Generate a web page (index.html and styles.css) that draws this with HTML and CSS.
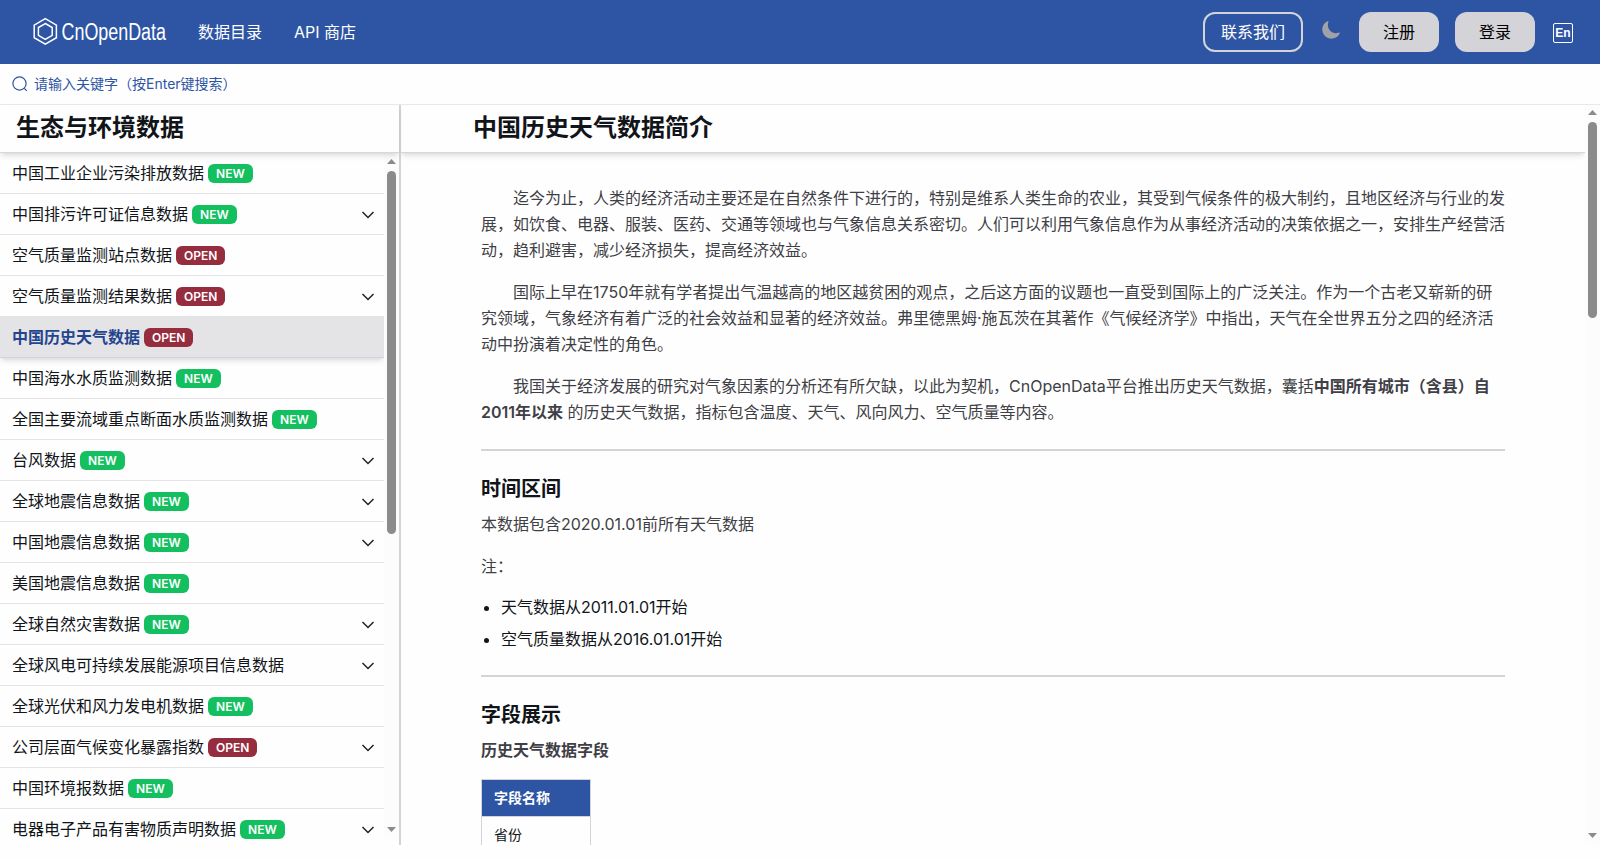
FILE: index.html
```html
<!DOCTYPE html>
<html lang="zh-CN">
<head>
    <meta charset="UTF-8">
    <meta name="viewport" content="width=device-width, initial-scale=1.0">
    <title>中国历史天气数据 - CnOpenData</title>
    <link rel="stylesheet" href="styles.css">
</head>
<body>

    <!-- Navbar -->
    <header class="navbar">
        <a class="logo" href="#">
            <svg width="136" height="32" viewBox="0 0 136 32" fill="none" stroke="#fff">
                <path d="M13.3 2.7 L24.4 9.1 V21.7 L13.3 28.1 L2.2 21.7 V9.1 Z" stroke-width="1.5"/>
                <path d="M13.3 7.5 L20.2 11.5 V19.3 L13.3 23.3 L6.4 19.3 V11.5 Z" stroke-width="1.5"/>
                <text class="logo-text" x="29.5" y="23.5" textLength="104.5" lengthAdjust="spacingAndGlyphs">CnOpenData</text>
            </svg>
        </a>
        <nav class="nav-links">
            <a href="#">数据目录</a>
            <a href="#">API 商店</a>
        </nav>
        <div class="nav-actions">
            <a class="btn btn-outline" href="#">联系我们</a>
            <svg class="moon" width="20" height="20" viewBox="0 0 512 512" fill="#a1a1aa">
                <path d="M264 480A232 232 0 0132 248c0-94 54-178.28 137.61-214.67a16 16 0 0121.06 21.06C181.07 76.43 176 104.66 176 136c0 110.28 89.72 200 200 200 31.34 0 59.57-5.07 81.61-14.67a16 16 0 0121.06 21.06C442.28 426 358 480 264 480z"/>
            </svg>
            <a class="btn btn-solid" href="#">注册</a>
            <a class="btn btn-solid" href="#">登录</a>
            <a class="lang" href="#">En</a>
        </div>
    </header>

    <!-- Search -->
    <div class="search">
        <svg width="16" height="16" viewBox="0 0 16 16" fill="none" stroke="#2d55a4" stroke-width="1.2">
            <circle cx="7.5" cy="7.5" r="6.6"/>
            <path d="M12.3 12.3 L14.8 14.8"/>
        </svg>
        <span>请输入关键字（按Enter键搜索）</span>
    </div>

    <div class="page">
        <!-- Sidebar -->
        <aside class="sidebar">
            <h2 class="title sidebar-title">生态与环境数据</h2>
            <div class="sidebar-body">
                <ul class="menu" id="menu"></ul>
                <div class="scrollbar scrollbar-menu">
                    <svg width="9" height="5" viewBox="0 0 9 5"><path d="M0 5 L4.5 0 L9 5 Z"/></svg>
                    <div class="thumb thumb-menu"></div>
                    <svg class="arrow-down" width="9" height="5" viewBox="0 0 9 5"><path d="M0 0 L4.5 5 L9 0 Z"/></svg>
                </div>
            </div>
        </aside>

        <!-- Content -->
        <main class="main">
            <div class="content">
                <h2 class="title content-title">中国历史天气数据简介</h2>
                <article class="article">
                    <p class="indent">迄今为止，人类的经济活动主要还是在自然条件下进行的，特别是维系人类生命的农业，其受到气候条件的极大制约，且地区经济与行业的发展，如饮食、电器、服装、医药、交通等领域也与气象信息关系密切。人们可以利用气象信息作为从事经济活动的决策依据之一，安排生产经营活动，趋利避害，减少经济损失，提高经济效益。</p>
                    <p class="indent">国际上早在1750年就有学者提出气温越高的地区越贫困的观点，之后这方面的议题也一直受到国际上的广泛关注。作为一个古老又崭新的研究领域，气象经济有着广泛的社会效益和显著的经济效益。弗里德黑姆·施瓦茨在其著作《气候经济学》中指出，天气在全世界五分之四的经济活动中扮演着决定性的角色。</p>
                    <p class="indent">我国关于经济发展的研究对气象因素的分析还有所欠缺，以此为契机，CnOpenData平台推出历史天气数据，囊括<strong>中国所有城市（含县）自2011年以来</strong> 的历史天气数据，指标包含温度、天气、风向风力、空气质量等内容。</p>
                    <hr>
                    <h3>时间区间</h3>
                    <p>本数据包含2020.01.01前所有天气数据</p>
                    <p>注：</p>
                    <ul class="notes">
                        <li>天气数据从2011.01.01开始</li>
                        <li>空气质量数据从2016.01.01开始</li>
                    </ul>
                    <hr>
                    <h3>字段展示</h3>
                    <h4>历史天气数据字段</h4>
                    <table class="fields">
                        <thead>
                            <tr><th>字段名称</th></tr>
                        </thead>
                        <tbody>
                            <tr><td>省份</td></tr>
                        </tbody>
                    </table>
                </article>
            </div>
            <div class="scrollbar">
                <svg width="9" height="5" viewBox="0 0 9 5"><path d="M0 5 L4.5 0 L9 5 Z"/></svg>
                <div class="thumb thumb-page"></div>
                <svg class="arrow-down" width="9" height="5" viewBox="0 0 9 5"><path d="M0 0 L4.5 5 L9 0 Z"/></svg>
            </div>
        </main>
    </div>

    <script>
        // name, badge, has submenu
        const items = [
            ["中国工业企业污染排放数据", "NEW", false],
            ["中国排污许可证信息数据", "NEW", true],
            ["空气质量监测站点数据", "OPEN", false],
            ["空气质量监测结果数据", "OPEN", true],
            ["中国历史天气数据", "OPEN", false],
            ["中国海水水质监测数据", "NEW", false],
            ["全国主要流域重点断面水质监测数据", "NEW", false],
            ["台风数据", "NEW", true],
            ["全球地震信息数据", "NEW", true],
            ["中国地震信息数据", "NEW", true],
            ["美国地震信息数据", "NEW", false],
            ["全球自然灾害数据", "NEW", true],
            ["全球风电可持续发展能源项目信息数据", "", true],
            ["全球光伏和风力发电机数据", "NEW", false],
            ["公司层面气候变化暴露指数", "OPEN", true],
            ["中国环境报数据", "NEW", false],
            ["电器电子产品有害物质声明数据", "NEW", true]
        ];
        const active = "中国历史天气数据";
        const chevron = '<svg class="chevron" width="14" height="8" viewBox="0 0 14 8"><path d="M1.5 1 L7 6.5 L12.5 1"/></svg>';

        const menu = document.getElementById("menu");
        items.forEach(([name, badge, sub]) => {
            const li = document.createElement("li");
            li.className = name === active ? "menu-item active" : "menu-item";
            li.innerHTML = "<span>" + name + "</span>";
            if (badge) {
                li.innerHTML += '<span class="badge badge-' + badge.toLowerCase() + '">' + badge + "</span>";
            }
            if (sub) {
                li.innerHTML += chevron;
            }
            menu.appendChild(li);
        });
    </script>

</body>
</html>
```
FILE: styles.css
```css
* {
    box-sizing: border-box;
}

body {
    margin: 0;
    height: 861px;
    overflow: hidden;
    background-color: #fefefe;
    color: #111418;
    font-family: Inter, "Noto Sans CJK SC", sans-serif;
    font-size: 16px;
    line-height: 24px;
}

a {
    color: inherit;
    text-decoration: none;
}

/* Navbar */
.navbar {
    display: flex;
    align-items: center;
    height: 64px;
    padding: 0 27px 0 32px;
    background-color: #2d55a4;
    color: #fff;
}

.logo {
    display: flex;
}

.logo svg {
    overflow: visible;
}

.logo-text {
    font-family: "Liberation Sans", sans-serif;
    font-size: 23.5px;
    fill: #fff;
    stroke: none;
}

.nav-links {
    display: flex;
    gap: 32px;
    margin-left: 30px;
}

.nav-actions {
    display: flex;
    align-items: center;
    margin-left: auto;
}

.btn {
    display: flex;
    align-items: center;
    justify-content: center;
    height: 40px;
    border-radius: 12px;
}

.btn-outline {
    width: 100px;
    border: 2px solid #d4d4d8;
}

.btn-solid {
    width: 80px;
    margin-right: 16px;
    background-color: #d4d4d8;
    color: #000;
}

.moon {
    margin: 0 18px 4px;
}

.lang {
    display: flex;
    align-items: center;
    justify-content: center;
    width: 20px;
    height: 20px;
    margin-top: 1px;
    margin-left: 2px;
    border: 1.5px solid #fff;
    border-radius: 2px;
    font-family: "Liberation Sans", sans-serif;
    font-size: 12px;
    font-weight: bold;
    line-height: 16px;
}

/* Search */
.search {
    display: flex;
    align-items: center;
    gap: 6px;
    height: 41px;
    padding-left: 12px;
    padding-bottom: 1px;
    border-bottom: 1px solid #e9e9eb;
    color: #2d55a4;
    font-size: 14px;
    line-height: 20px;
}

/* Layout */
.page {
    display: flex;
    height: 740px;
}

.sidebar {
    display: flex;
    flex-direction: column;
    width: 401px;
    border-right: 2px solid #d4d4d8;
}

.title {
    position: relative;
    margin: 0;
    height: 48px;
    flex: none;
    border-bottom: 1px solid #d8d8da;
    box-shadow: 0 4px 6px -1px rgba(0, 0, 0, 0.1), 0 2px 4px -2px rgba(0, 0, 0, 0.1);
    font-size: 24px;
    font-weight: 600;
    line-height: 45px;
}

.sidebar-title {
    padding-left: 16px;
}

.sidebar-body {
    display: flex;
    height: 686px;
}

/* Menu */
.menu {
    flex: 1;
    margin: 0;
    padding: 0;
    list-style: none;
    overflow: hidden;
}

.menu-item {
    display: flex;
    align-items: center;
    height: 41px;
    padding: 0 9px 0 12px;
    border-bottom: 1px solid #e4e4e7;
}

.menu-item.active {
    position: relative;
    background-color: #e4e4e7;
    border-bottom-color: #d4d4d8;
    box-shadow: 0 4px 6px -1px rgba(0, 0, 0, 0.1), 0 2px 4px -2px rgba(0, 0, 0, 0.1);
    color: #24448f;
    font-weight: 600;
}

.badge {
    height: 19px;
    margin-left: 4px;
    padding: 0 8px;
    border-radius: 6px;
    color: #fff;
    font-size: 12px;
    font-weight: 600;
    line-height: 19px;
}

.badge-new {
    background-color: #13bf5f;
}

.badge-open {
    background-color: #962d3e;
}

.chevron {
    margin-top: 2px;
    margin-left: auto;
    fill: none;
    stroke: #222;
    stroke-width: 1.5;
}

/* Scrollbar */
.scrollbar {
    display: flex;
    flex-direction: column;
    align-items: center;
    flex: none;
    width: 15px;
    padding: 5px 0 7px;
    background-color: #fcfcfc;
}

.scrollbar-menu {
    padding-top: 6px;
}

.scrollbar svg {
    fill: #8b8b8b;
    flex: none;
}

.thumb {
    width: 9px;
    margin-top: 7px;
    border-radius: 5px;
    background-color: #8b8b8b;
}

.thumb-menu {
    height: 363px;
}

.thumb-page {
    height: 196px;
}

.arrow-down {
    margin-top: auto;
}

/* Content */
.main {
    display: flex;
    flex: 1;
}

.content {
    flex: 1;
    overflow: hidden;
}

.content-title {
    padding-left: 72px;
}

.article {
    width: 1024px;
    margin-left: 80px;
    padding-top: 32px;
}

.article p {
    margin: 0 0 16px;
    color: #3f3f46;
    line-height: 26px;
}

.article .indent {
    text-indent: 32px;
}

.article strong {
    font-weight: 600;
}

.article hr {
    height: 2px;
    margin: 24px 0;
    border: none;
    background-color: #d4d4d8;
}

.article h3 {
    margin: 0 0 8px;
    font-size: 20px;
    font-weight: 600;
    line-height: 28px;
}

.article h4 {
    margin: 0 0 16px;
    color: #3f3f46;
    font-weight: 600;
    line-height: 26px;
}

.notes {
    margin: 0;
    padding-left: 20px;
}

.notes li {
    margin-bottom: 8px;
}

/* Field table */
.fields {
    width: 110px;
    border-collapse: collapse;
    font-size: 14px;
    line-height: 20px;
}

.fields th,
.fields td {
    padding: 8px 12px;
    border: 1px solid #d4d4d8;
    text-align: left;
}

.fields th {
    background-color: #2d55a4;
    color: #fff;
    font-weight: 600;
}
```
